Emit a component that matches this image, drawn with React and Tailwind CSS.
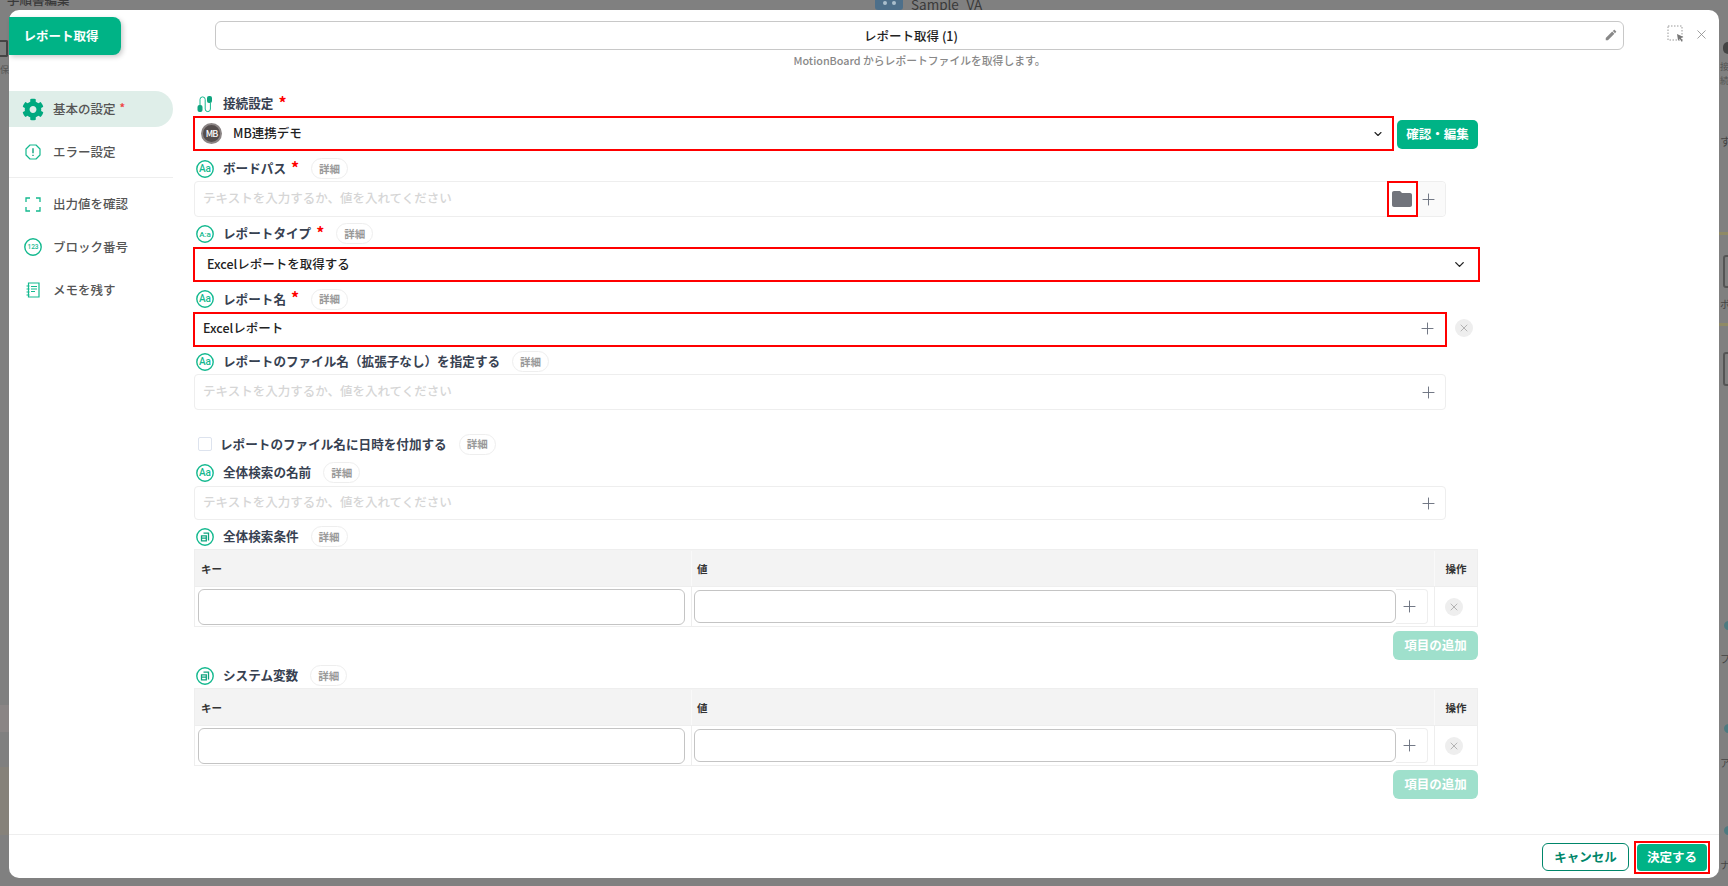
import { ChevronDown, Plus, X } from 'lucide-react';
import { FaCog } from 'react-icons/fa';

const PLACEHOLDER = 'テキストを入力するか、値を入れてください';
const GREEN = '#14b98f';

const CircleIcon = ({ children }) => (
  <svg width="18" height="18" viewBox="0 0 18 18" className="shrink-0">
    <circle cx="9" cy="9" r="8.2" fill="none" stroke={GREEN} strokeWidth="1.4" />
    {children}
  </svg>
);

const TextIcon = ({ text = 'Aa', small }) => (
  <CircleIcon>
    <text
      x="9"
      y={small ? 11.8 : 12.4}
      textAnchor="middle"
      fontSize={small ? 8 : 10}
      fontWeight="500"
      fill={GREEN}
      fontFamily="Roboto, sans-serif"
    >
      {text}
    </text>
  </CircleIcon>
);

const TableIcon = () => (
  <CircleIcon>
    <path d="M7.5 5.2h5v7.4M5.5 7.8h4.8v5h-4.8zM5.5 10.2h4.8" fill="none" stroke="#0fa47f" strokeWidth="1.3" />
  </CircleIcon>
);

const ConnectIcon = () => (
  <svg width="18" height="20" viewBox="0 0 18 20" className="shrink-0">
    <rect x="1.5" y="11" width="5" height="7" rx="2" fill="#0fa47f" />
    <rect x="11" y="2" width="5" height="7" rx="2" fill="#0fa47f" />
    <path d="M4 11V5.5a2.6 2.6 0 0 1 5.2 0v9.5a2.6 2.6 0 0 0 5.2 0V9" fill="none" stroke={GREEN} strokeWidth="1" />
  </svg>
);

const Chip = () => (
  <span className="ml-3 flex h-[21px] w-[37px] shrink-0 items-center justify-center rounded-full border border-[#eeeeee] text-[10.5px] font-bold text-[#999999]">
    詳細
  </span>
);

const Label = ({ icon, text, required, chip = true, className = '' }) => (
  <div className={`flex items-center ${className}`}>
    <span className="ml-[2px] flex w-[18px] shrink-0 justify-center">{icon}</span>
    <span className="ml-[9px] text-[12.6px] font-bold text-[#374151]">{text}</span>
    {required && (
      <span className="ml-[5px] -mt-[4px] text-[16px] leading-none font-bold text-[#ff0000]">*</span>
    )}
    {chip && <Chip />}
  </div>
);

const PlusIcon = ({ size = 19 }) => <Plus size={size} strokeWidth={1.2} className="text-[#6b7280]" />;

const RemoveDot = () => (
  <span className="flex h-[18px] w-[18px] items-center justify-center rounded-full bg-[#eeeeee]">
    <X size={12} strokeWidth={1.4} className="text-[#9a9a9a]" />
  </span>
);

const TextField = ({ className = '' }) => (
  <div className={`flex w-[1252px] items-center rounded-[4px] border border-[#eeeeee] pl-2 pr-[7px] ${className}`}>
    <span className="flex-1 pb-px text-[12.5px] font-medium text-[#d6d6d6]">{PLACEHOLDER}</span>
    <PlusIcon />
  </div>
);

const KeyValueTable = () => (
  <div className="w-[1284px] border border-[#eeeeee]">
    <div className="grid h-[36px] grid-cols-[496px_743px_1fr] bg-[#f3f3f3] pt-px text-[10.5px] font-bold text-[#333333]">
      <span className="flex items-center pl-[6px]">キー</span>
      <span className="flex items-center border-l border-[#f9f9f9] pl-[5px]">値</span>
      <span className="flex items-center justify-center border-l border-[#f9f9f9]">操作</span>
    </div>
    <div className="grid h-[40px] grid-cols-[496px_743px_1fr]">
      <div className="flex items-center border-t border-[#eeeeee] pl-[3px] pr-[6px]">
        <div className="h-[36px] w-full rounded-[6px] border border-[#c4c4c4]" />
      </div>
      <div className="flex items-center border-t border-l border-[#eeeeee] pl-[2px] pr-[6px]">
        <div className="h-[33px] flex-1 rounded-[6px] border border-[#c4c4c4]" />
        <div className="flex h-[35px] w-[32px] items-center justify-center rounded-r-[4px] border border-l-0 border-[#eeeeee] pr-1">
          <PlusIcon />
        </div>
      </div>
      <div className="flex items-center justify-center border-t border-l border-[#eeeeee] pr-1">
        <RemoveDot />
      </div>
    </div>
  </div>
);

const AddButton = () => (
  <div className="mt-1 flex w-[1284px] justify-end">
    <span className="flex h-[29px] w-[85px] items-center justify-center rounded-[6px] bg-[#9fe0cc] text-[12.5px] font-bold text-white">
      項目の追加
    </span>
  </div>
);

const SideItem = ({ icon, text, active, className = '' }) => (
  <div
    className={`flex h-9 items-center rounded-r-full text-[12.5px] font-medium text-[#555555] ${
      active ? 'bg-[#dfeee9]' : ''
    } ${className}`}
  >
    <span className="ml-[13px] flex w-[22px] shrink-0 justify-center">{icon}</span>
    <span className="ml-[9px]">{text}</span>
    {active && <span className="-mt-[3px] ml-[4px] text-[11px] font-bold text-[#ef4444]">*</span>}
  </div>
);

const Sidebar = () => (
  <div className="w-[164px] shrink-0">
    <SideItem active text="基本の設定" icon={<FaCog size={23} className="text-[#00a97f]" />} />
    <SideItem
      className="mt-[7px]"
      text="エラー設定"
      icon={
        <svg width="16" height="16" viewBox="0 0 16 16">
          <path d="M5 1h6l4 4v6l-4 4H5l-4-4V5z" fill="none" stroke={GREEN} strokeWidth="1.2" strokeLinejoin="round" />
          <path d="M8 4.2v5M8 10.8v1.2" stroke="#0fa47f" strokeWidth="1.4" />
        </svg>
      }
    />
    <div className="mt-[7px] mb-2 h-px bg-[#eeeeee]" />
    <SideItem
      text="出力値を確認"
      icon={
        <svg width="16" height="15" viewBox="0 0 16 15">
          <path d="M1 5V1h4M11 1h4v4M15 10v4h-4M5 14H1v-4" fill="none" stroke={GREEN} strokeWidth="1.3" />
        </svg>
      }
    />
    <SideItem
      className="mt-[7px]"
      text="ブロック番号"
      icon={
        <CircleIcon>
          <text x="9" y="11.4" textAnchor="middle" fontSize="6.5" fontWeight="500" fill={GREEN} fontFamily="Roboto, sans-serif">
            123
          </text>
        </CircleIcon>
      }
    />
    <SideItem
      className="mt-[7px]"
      text="メモを残す"
      icon={
        <svg width="16" height="16" viewBox="0 0 16 16">
          <path d="M3.5 1h10.5v14H3.5z" fill="none" stroke={GREEN} strokeWidth="1.2" />
          <path d="M6 4.5h6M6 7h6M6 9.5h4M1.5 4h3M1.5 7h3M1.5 10h3M1.5 13h3" stroke={GREEN} strokeWidth="1" />
        </svg>
      }
    />
  </div>
);

const FormArea = () => (
  <div className="ml-[21px]">
    <Label className="h-[25px]" icon={<ConnectIcon />} text="接続設定" required chip={false} />
    <div className="flex items-center">
      <div className="-ml-px flex h-[35px] w-[1201px] items-center border-2 border-[#ff0000] pl-[6px] pr-[8px]">
        <span className="flex h-[21px] w-[21px] items-center justify-center rounded-full border-2 border-[#8b8585] bg-[#544e4e] text-[9px] font-medium tracking-[-1px] text-white">
          MB
        </span>
        <span className="ml-[11px] flex-1 text-[12.5px] font-medium text-[#222222]">MB連携デモ</span>
        <ChevronDown size={12} strokeWidth={2.2} className="text-[#222222]" />
      </div>
      <span className="ml-[3px] mt-[2px] flex h-[29px] w-[81px] items-center justify-center rounded-[5px] bg-[#00b386] text-[12.5px] font-bold text-white">
        確認・編集
      </span>
    </div>

    <Label className="mt-[5px] h-[25px]" icon={<TextIcon />} text="ボードパス" required />
    <div className="flex h-9 w-[1252px] items-center rounded-[4px] border border-[#eeeeee] pl-2">
      <span className="flex-1 pb-px text-[12.5px] font-medium text-[#d6d6d6]">{PLACEHOLDER}</span>
      <span className="flex h-9 w-[31px] items-center justify-center border-2 border-[#ff0000] pr-px">
        <svg width="24" height="24" viewBox="0 0 24 24" fill="#71747c">
          <path d="M10 4H4c-1.1 0-2 .9-2 2v12c0 1.1.9 2 2 2h16c1.1 0 2-.9 2-2V8c0-1.1-.9-2-2-2h-8l-2-2z" />
        </svg>
      </span>
      <span className="flex h-[34px] w-[27px] items-center justify-center rounded-r-[4px] bg-[#fafafa] pr-[7px]">
        <PlusIcon />
      </span>
    </div>

    <Label className="mt-1 h-[26px] pb-px" icon={<TextIcon text="A:a" small />} text="レポートタイプ" required />
    <div className="-ml-px flex h-[35px] w-[1287px] items-center border-2 border-[#ff0000] pl-[12px] pr-[11px]">
      <span className="flex-1 text-[12.5px] font-medium text-[#222222]">Excelレポートを取得する</span>
      <ChevronDown size={15} strokeWidth={2.2} className="text-[#222222]" />
    </div>

    <Label className="mt-1 h-[26px]" icon={<TextIcon />} text="レポート名" required />
    <div className="flex items-center">
      <div className="-ml-px flex h-[35px] w-[1254px] items-center border-2 border-[#ff0000] pb-[2px] pl-2 pr-[8px]">
        <span className="flex-1 text-[12.5px] font-medium text-[#222222]">Excelレポート</span>
        <PlusIcon />
      </div>
      <span className="ml-2 -mt-[3px]">
        <RemoveDot />
      </span>
    </div>

    <Label className="mt-[2px] h-[25px]" icon={<TextIcon />} text="レポートのファイル名（拡張子なし）を指定する" />
    <TextField className="h-9" />

    <div className="mt-[22px] flex h-6 items-center">
      <span className="ml-1 h-[14px] w-[14px] rounded-[2px] border border-[#dde3ee]" />
      <span className="ml-2 text-[12.6px] font-bold text-[#374151]">レポートのファイル名に日時を付加する</span>
      <Chip />
    </div>

    <Label className="mt-1 h-[26px] pb-px" icon={<TextIcon />} text="全体検索の名前" />
    <TextField className="h-[34px]" />

    <Label className="mt-1 h-[25px]" icon={<TableIcon />} text="全体検索条件" />
    <KeyValueTable />
    <AddButton />

    <Label className="mt-[3px] h-[25px]" icon={<TableIcon />} text="システム変数" />
    <KeyValueTable />
    <AddButton />
  </div>
);

// dimmed page that shows around the modal
const Backdrop = () => (
  <div className="absolute inset-0 overflow-hidden text-[#3a3a3a]">
    <span className="absolute left-[7px] -top-[9px] text-[12.5px] font-medium">手順書編集</span>
    <span className="absolute left-0 top-[40px] h-[17px] w-[8px] rounded-r-[2px] border-2 border-l-0 border-[#444444]" />
    <span className="absolute left-0 top-[63px] text-[9px] text-[#555555]">保存</span>
    <span className="absolute left-0 top-[705px] h-[27px] w-[9px] bg-[#8a8585]" />
    <span className="absolute left-0 top-[767px] h-[68px] w-[9px] bg-[#86827a]" />
    <span className="absolute left-[875px] -top-[8px] flex h-[18px] w-[28px] items-center justify-center gap-[5px] rounded-b-[3px] bg-[#4d6f8a] pt-[4px]">
      <span className="h-[4px] w-[4px] rounded-full bg-[#a9bfcd]" />
      <span className="h-[4px] w-[4px] rounded-full bg-[#a9bfcd]" />
    </span>
    <span className="absolute left-[911px] -top-[6px] text-[13.5px]">Sample_VA</span>
    <span className="absolute left-[1723px] top-[42px] h-[12px] w-[5px] rounded-l-full bg-[#444444]" />
    <span className="absolute left-[1720px] top-[60px] text-[9px] text-[#555555]">接続</span>
    <span className="absolute left-[1720px] top-[133px] text-[11px] text-[#444444]">す</span>
    <span className="absolute left-[1719px] top-[232px] h-[3px] w-[9px] bg-[#8f8a66]" />
    <span className="absolute left-[1723px] top-[255px] h-[33px] w-[8px] rounded-l-[3px] border-2 border-[#555555]" />
    <span className="absolute left-[1720px] top-[296px] text-[10px] text-[#444444]">ボ</span>
    <span className="absolute left-[1719px] top-[323px] h-[3px] w-[9px] bg-[#8f8a66]" />
    <span className="absolute left-[1723px] top-[352px] h-[34px] w-[8px] rounded-l-[3px] border-2 border-[#555555]" />
    <span className="absolute left-[1724px] top-[621px] h-[9px] w-[6px] rounded-l-full bg-[#4d7a80]" />
    <span className="absolute left-[1720px] top-[651px] text-[10px] text-[#444444]">フ</span>
    <span className="absolute left-[1724px] top-[724px] h-[9px] w-[6px] rounded-l-full bg-[#4d7a80]" />
    <span className="absolute left-[1720px] top-[755px] text-[10px] text-[#444444]">ア</span>
    <span className="absolute left-[1724px] top-[826px] h-[9px] w-[6px] rounded-l-full bg-[#4d7a80]" />
    <span className="absolute left-[1720px] top-[857px] text-[10px] text-[#444444]">ナ</span>
  </div>
);

export default function App() {
  return (
    <div className="relative h-screen overflow-hidden bg-[#808080] px-[9px] pt-[10px] pb-2 font-['Noto_Sans_CJK_JP','Noto_Sans',sans-serif]">
      <Backdrop />
      <div className="relative flex h-full flex-col rounded-[10px] bg-white">
        <div className="flex h-[81px] shrink-0 items-start pt-[7px]">
          <span className="flex h-[38px] w-[112px] shrink-0 items-center justify-center rounded-r-[8px] bg-[#00b386] pr-2 text-[12.5px] font-bold text-white shadow-[2px_2px_5px_rgba(0,0,0,0.2)]">
            レポート取得
          </span>
          <div className="ml-[94px] mt-1 w-[1409px] shrink-0">
            <div className="relative flex h-[29px] items-center justify-center rounded-[6px] border border-[#c8c8c8] pr-[17px] pt-px text-[12.5px] font-medium text-[#222222]">
              レポート取得 (1)
              <svg width="14" height="14" viewBox="0 0 24 24" fill="#888888" className="absolute right-[5px] top-[6px]">
                <path d="M3 17.25V21h3.75L17.81 9.94l-3.75-3.75L3 17.25zM20.71 7.04c.39-.39.39-1.02 0-1.41l-2.34-2.34c-.39-.39-1.02-.39-1.41 0l-1.83 1.83 3.75 3.75 1.83-1.83z" />
              </svg>
            </div>
            <p className="mt-[2px] text-center text-[10.8px] font-medium text-[#888888]">
              MotionBoard からレポートファイルを取得します。
            </p>
          </div>
          <div className="ml-[43px] mt-[8px] flex items-center">
            <svg width="18" height="18" viewBox="0 0 18 18">
              <rect x="1" y="1" width="14" height="14" fill="none" stroke="#999999" strokeWidth="1" strokeDasharray="1.5 1.5" />
              <path d="M10 9l6.5 3-2.6 1 1.9 3-1.2.8-1.9-3-1.6 2z" fill="#777777" />
            </svg>
            <X size={15} strokeWidth={1.3} className="ml-[9px] text-[#8a8a8a]" />
          </div>
        </div>

        <div className="flex min-h-0 flex-1">
          <Sidebar />
          <FormArea />
        </div>

        <div className="flex h-[44px] shrink-0 items-start justify-end border-t border-[#eeeeee] pr-[9px] pt-[6px]">
          <span className="mt-[2px] flex h-[28px] w-[87px] items-center justify-center rounded-[6px] border border-[#00866a] text-[12.5px] font-bold text-[#00866a]">
            キャンセル
          </span>
          <span className="ml-[5px] flex h-[33px] w-[76px] items-center justify-center border-2 border-[#ff0000] p-px">
            <span className="flex h-full w-full items-center justify-center rounded-[4px] bg-[#00b386] text-[12.5px] font-bold text-white">
              決定する
            </span>
          </span>
        </div>
      </div>
    </div>
  );
}
